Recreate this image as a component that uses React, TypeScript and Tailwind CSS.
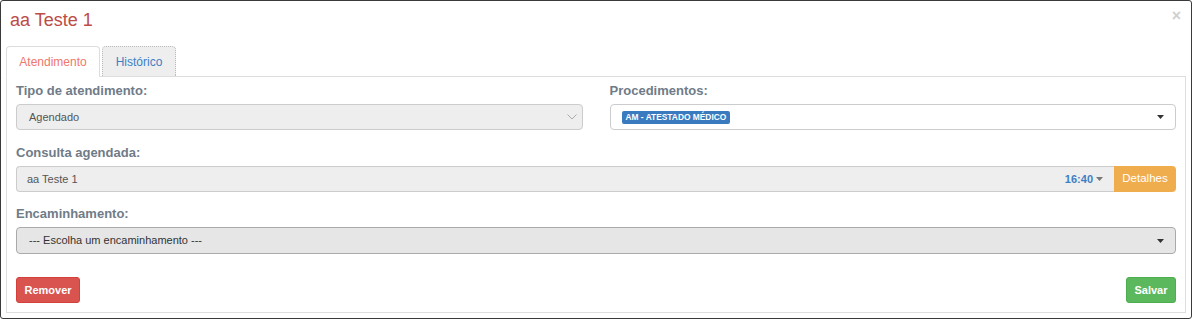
const font = { fontFamily: '"Liberation Sans", Arial, sans-serif' };

function Caret() {
  return (
    <svg width="7" height="4" viewBox="0 0 7 4" className="shrink-0">
      <path d="M0 0 L7 0 L3.5 4 Z" fill="#333" />
    </svg>
  );
}

function Chevron() {
  return (
    <svg width="10" height="6" viewBox="0 0 10 6" className="shrink-0">
      <path d="M0.5 0.5 L5 5 L9.5 0.5" fill="none" stroke="#aaa" strokeWidth="1" />
    </svg>
  );
}

function Label({ children }: { children: React.ReactNode }) {
  return <div className="mb-[5px] h-[16px] text-[13px] font-bold leading-[16px] text-[#707b88]">{children}</div>;
}

export default function App() {
  return (
    <div className="h-[319px] w-[1194px] overflow-hidden bg-white" style={font}>
      <div className="flex h-[319px] w-[1192px] flex-col rounded-[3px] border border-[#3a3a3a] bg-white">
        {/* Header */}
        <div className="flex h-[45px] items-start justify-between pl-[9px] pr-[10px] pt-[8px]">
          <h4 className="text-[18px] leading-[22px] text-[#bd4b47]">aa Teste 1</h4>
          <span className="mt-[-1px] text-[16px] font-bold leading-[16px] text-[#d0d0d0]">×</span>
        </div>

        <div className="px-[5px]">
          {/* Tabs */}
          <div className="flex h-[31px] items-end border-b border-[#ddd]">
            <div className="mb-[-1px] flex h-[31px] w-[94px] items-center justify-center rounded-t-[4px] border border-[#ddd] border-b-white bg-white text-[12px] text-[#f0776c]">
              Atendimento
            </div>
            <div className="ml-[2px] flex h-[30px] w-[74px] items-center justify-center rounded-t-[4px] border border-dotted border-[#bbb] border-b-0 bg-[#eee] text-[12px] text-[#3f7fc4]">
              Histórico
            </div>
          </div>

          {/* Panel */}
          <div className="h-[236px] border border-t-0 border-[#ddd] px-[9px] pt-[6px]">
            <div className="grid grid-cols-2 gap-x-[27px]">
              <div>
                <Label>Tipo de atendimento:</Label>
                <div className="flex h-[26px] items-center justify-between rounded-[4px] border border-[#ccc] bg-[#eee] pl-[12px] pr-[5px] text-[11px] text-[#555]">
                  <span>Agendado</span>
                  <Chevron />
                </div>
              </div>
              <div>
                <Label>Procedimentos:</Label>
                <div className="flex h-[26px] items-center justify-between rounded-[4px] border border-[#ccc] bg-white pl-[11px] pr-[11px]">
                  <span className="rounded-[2px] bg-[#3a7bbf] px-[4px] py-[2px] text-[8.4px] font-bold leading-[9px] text-white">
                    AM - ATESTADO MÉDICO
                  </span>
                  <Caret />
                </div>
              </div>
            </div>

            <div className="mt-[15px]">
              <Label>Consulta agendada:</Label>
              <div className="flex h-[26px]">
                <div className="flex flex-1 items-center justify-between rounded-l-[4px] border border-r-0 border-[#ccc] bg-[#eee] pl-[10px] pr-[11px] text-[11px] text-[#555]">
                  <span>aa Teste 1</span>
                  <span className="flex items-center gap-[3px] text-[11px] font-bold text-[#3f7fc4]">
                    16:40
                    <svg width="7" height="4" viewBox="0 0 7 4">
                      <path d="M0 0 L7 0 L3.5 4 Z" fill="#777" />
                    </svg>
                  </span>
                </div>
                <div className="flex w-[62px] items-center justify-center rounded-r-[4px] bg-[#f0ad4e] text-[11.5px] text-white">
                  Detalhes
                </div>
              </div>
            </div>

            <div className="mt-[14px]">
              <Label>Encaminhamento:</Label>
              <div className="flex h-[27px] items-center justify-between rounded-[4px] border border-[#aaa] bg-[#e6e6e6] pl-[12px] pr-[11px] text-[11px] text-[#333]">
                <span>--- Escolha um encaminhamento ---</span>
                <Caret />
              </div>
            </div>

            <div className="mt-[23px] flex justify-between">
              <button className="h-[26px] w-[64px] rounded-[3px] border border-[#d43f3a] bg-[#d9534f] text-[11px] font-bold text-white">
                Remover
              </button>
              <button className="h-[26px] w-[50px] rounded-[3px] border border-[#4cae4c] bg-[#5cb85c] text-[11px] font-bold text-white">
                Salvar
              </button>
            </div>
          </div>
        </div>
      </div>
    </div>
  );
}
